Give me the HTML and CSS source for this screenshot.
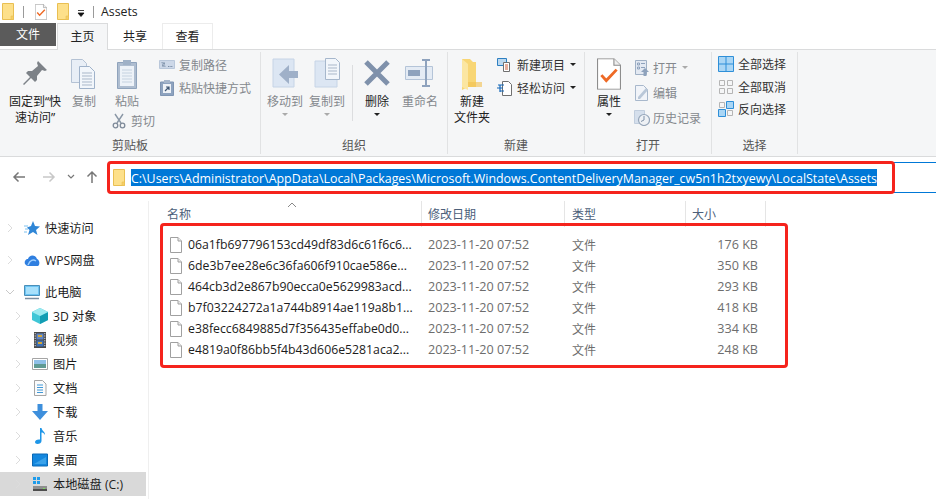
FILE: index.html
```html
<!DOCTYPE html>
<html lang="zh">
<head>
<meta charset="utf-8">
<title>Assets</title>
<link rel="stylesheet" href="styles.css">
</head>
<body>
<svg class="defs" width="0" height="0" aria-hidden="true">
  <defs>
    <symbol id="folder" viewBox="0 0 12 17"><path d="M.5.5h11v16H.5z" fill="#fde08a" stroke="#e9bf52"/><path d="M9 13h2.500v3.500H9z" fill="#f6cf66" stroke="#e9bf52" stroke-width=".6"/></symbol>
    <symbol id="file" viewBox="0 0 12 16"><path d="M.5.500h7.500l3.500 3.500v11.500H.5z" fill="#fff" stroke="#a0a0a0"/><path d="M8 .5V4h3.500" fill="#ececec" stroke="#a0a0a0"/></symbol>
    <symbol id="checkdoc" viewBox="0 0 22 29"><path d="M.5.500h15l6 6v22H.5z" fill="#fff" stroke="#8d8d8d"/><path d="M15.500.5v6h6" fill="#eee" stroke="#8d8d8d"/><path d="M4 15.500l4.500 5L18 10.500" fill="none" stroke="#ee6a26" stroke-width="2.600"/></symbol>
    <symbol id="back" viewBox="0 0 14 12"><path d="M13 6H2M6.500 1.500L2 6l4.500 4.500" fill="none" stroke="currentColor" stroke-width="1.500"/></symbol>
    <symbol id="up" viewBox="0 0 12 14"><path d="M6 13V2M1.500 6.500L6 2l4.500 4.500" fill="none" stroke="currentColor" stroke-width="1.500"/></symbol>
    <symbol id="chev" viewBox="0 0 8 10"><path d="M2 1l4 4-4 4" fill="none" stroke="currentColor" stroke-width="1"/></symbol>
  </defs>
</svg>
<div class="window">
  <header class="titlebar">
    <svg class="qa-folder"><use href="#folder"/></svg>
    <span class="qa-sep"></span>
    <svg class="qa-check"><use href="#checkdoc"/></svg>
    <svg class="qa-folder qa-folder2"><use href="#folder"/></svg>
    <svg class="qa-drop" viewBox="0 0 8 8"><path d="M1 1.500h6M1 4h6L4 7.500z" fill="#111" stroke="#111" stroke-width=".8"/></svg>
    <span class="qa-sep"></span>
    <span class="title">Assets</span>
  </header>

  <nav class="tabs">
    <span class="tab tab-file">文件</span>
    <span class="tab tab-active">主页</span>
    <span class="tab tab-share">共享</span>
    <span class="tab tab-hover">查看</span>
  </nav>

  <section class="ribbon">
    <div class="group g-clip">
      <div class="group-body">
        <div class="big w-pin">
          <svg class="ico32" viewBox="0 0 32 32"><path d="M19 3l9 9-2 1-3-1-5 6 0 4-2 2-4-4-7 7-1-1 7-7-4-4 2-2 4 0 6-5-1-3z" fill="#7d8288"/></svg>
          <span class="lbl">固定到“快<br>速访问”</span>
        </div>
        <div class="big w-copy dis">
          <svg class="ico32" viewBox="0 0 32 32"><path d="M3.500 1.500h11l4 4v19h-15z" fill="#e8eef6" stroke="#b4c2d4"/><path d="M11.500 8.500h10l5 5v17h-15z" fill="#f2f6fb" stroke="#9fb2ca"/><path d="M14 15h10M14 18h10M14 21h10M14 24h10M14 27h10" stroke="#a9b7c9"/></svg>
          <span class="lbl">复制</span>
        </div>
        <div class="clip-col">
          <div class="big w-paste dis">
            <svg class="ico32" viewBox="0 0 32 32"><path d="M6.500 4.500h19v26h-19z" fill="#aebdd0" stroke="#8fa3bc"/><path d="M9 8h14v20H9z" fill="#edf2f8"/><path d="M12 2h8v5h-8z" fill="#9fb1c7"/><path d="M11 12h10M11 15h10M11 18h10M11 21h10M11 24h10" stroke="#c5d2e0"/></svg>
            <span class="lbl">粘贴</span>
          </div>
          <div class="small dis cut">
            <svg class="ico-s" viewBox="0 0 14 16"><path d="M3 1l6 9M11 1L5 10" stroke="#8a97a6" stroke-width="1.400"/><circle cx="3.500" cy="12.500" r="2.300" fill="none" stroke="#7e8a99" stroke-width="1.300"/><circle cx="10.500" cy="12.500" r="2.300" fill="none" stroke="#7e8a99" stroke-width="1.300"/></svg>
            <span>剪切</span>
          </div>
        </div>
        <div class="small-col clip-right">
          <div class="small dis">
            <svg class="ico-s" viewBox="0 0 16 10"><path d="M.5.500h15v8H.5z" fill="#cdd8e8" stroke="#b9c7da"/><path d="M3 2l1 5 1-5 1 5M9 6.500h5" fill="none" stroke="#5f7692" stroke-width=".8" stroke-dasharray="1 .6"/></svg>
            <span>复制路径</span>
          </div>
          <div class="small dis">
            <svg class="ico-s" viewBox="0 0 14 16"><path d="M.5 2h13v13.500H.5z" fill="#8ea3bf" stroke="#7f95b3"/><path d="M4 0h6v3H4z" fill="#a5b5ca"/><path d="M3 4h8v9H3z" fill="#eef2f7"/><path d="M5 11l4-4M6 7h3v3" fill="none" stroke="#3e5674" stroke-width="1.200"/></svg>
            <span>粘贴快捷方式</span>
          </div>
        </div>
      </div>
      <div class="group-label">剪贴板</div>
    </div>

    <div class="group g-org">
      <div class="group-body">
        <div class="big w-move dis">
          <svg class="ico32" viewBox="0 0 32 32"><path d="M4 1h21v28H4z" fill="#dce6f3" stroke="#c6d4e6"/><path d="M30 11v7H21v6l-10-9.500L21 5v6z" fill="#9fb0c8" transform="translate(-1 2)"/></svg>
          <span class="lbl">移动到</span><i class="arrow grey"></i>
        </div>
        <div class="big w-copyto dis">
          <svg class="ico32" viewBox="0 0 32 32"><path d="M4 3h22v26H4z" fill="#dce6f3" stroke="#c6d4e6"/><path d="M14.500.5h10l4 4v17h-14z" fill="#f2f6fb" stroke="#a6b7cc"/><path d="M17 7h9M17 10h9M17 13h9M17 16h9" stroke="#a9b7c9"/></svg>
          <span class="lbl">复制到</span><i class="arrow grey"></i>
        </div>
        <span class="vsep"></span>
        <div class="big w-del">
          <svg class="ico32" viewBox="0 0 32 32"><path d="M5 4l22 22M27 4L5 26" stroke="#7f91ab" stroke-width="5"/></svg>
          <span class="lbl">删除</span><i class="arrow"></i>
        </div>
        <div class="big w-ren dis">
          <svg class="ico32" viewBox="0 0 32 32"><path d="M1.500 8.500h27v13h-27z" fill="#e4ebf4" stroke="#b4c4d8"/><path d="M4 12h12v6H4z" fill="#8ea2bd"/><path d="M18 2h8M18 28h8M22 2v26" fill="none" stroke="#8ea2bd" stroke-width="2"/></svg>
          <span class="lbl">重命名</span>
        </div>
      </div>
      <div class="group-label">组织</div>
    </div>

    <div class="group g-new">
      <div class="group-body">
        <div class="big w-newf enabled">
          <svg class="ico32" viewBox="0 0 32 32"><path d="M6 1l8 0 3 3 0 0h3v25H12l-6 3z" fill="#f8d675"/><path d="M6 1v28l6 3V6z" fill="#fbe6a2"/><path d="M12 24h14v5H12z" fill="#f1c04f" opacity=".6"/></svg>
          <span class="lbl">新建<br>文件夹</span>
        </div>
        <div class="small-col new-right">
          <div class="small">
            <svg class="ico-s" viewBox="0 0 16 14"><path d="M.5.500h9v7h-9z" fill="#bcd8ef" stroke="#2d7fc1"/><path d="M6.500 4.500h6v9h-6z" fill="#fff" stroke="#707070"/><path d="M8 7h3M8 9h3M8 11h3" stroke="#d05a34"/></svg>
            <span>新建项目</span><i class="arrow side"></i>
          </div>
          <div class="small">
            <svg class="ico-s" viewBox="0 0 16 16"><path d="M5.500 1.500h6l3 3v11h-9z" fill="#fff" stroke="#707070"/><path d="M1 5h6M0 8h6M3 11h4M3 5v7" fill="none" stroke="#1366b8" stroke-width="1.200"/></svg>
            <span>轻松访问</span><i class="arrow side"></i>
          </div>
        </div>
      </div>
      <div class="group-label">新建</div>
    </div>

    <div class="group g-open">
      <div class="group-body">
        <div class="big w-prop enabled">
          <svg class="ico32" viewBox="0 0 22 29"><use href="#checkdoc"/></svg>
          <span class="lbl">属性</span><i class="arrow"></i>
        </div>
        <div class="small-col open-right">
          <div class="small dis">
            <svg class="ico-s" viewBox="0 0 14 16"><path d="M.5.500h11v14H.5z" fill="#e3e9f2" stroke="#9fb0c5"/><path d="M2.500 3h2v2h-2zM2.500 7h2v2h-2zM6 3.500h4M6 7.500h4" stroke="#8ea2bc" fill="none"/><path d="M10 8l4 4h-2.500v4h-3v-4H6z" fill="#8ea2bc"/></svg>
            <span>打开</span><i class="arrow side grey"></i>
          </div>
          <div class="small dis">
            <svg class="ico-s" viewBox="0 0 14 16"><path d="M.5.500h8l4 4v11H.5z" fill="#f1f4f9" stroke="#a8b8cc"/><path d="M3 12l8-9 2 2-8 9H3z" fill="#b9c7d8"/></svg>
            <span>编辑</span>
          </div>
          <div class="small dis">
            <svg class="ico-s" viewBox="0 0 16 16"><path d="M.5.500h10v13H.5z" fill="#d5dfec" stroke="#c0cddd"/><circle cx="10" cy="10" r="5.500" fill="#eef1f5" stroke="#95a5b9" stroke-width="1.200"/><path d="M10 6v4l-3 1.500" fill="none" stroke="#7f91a8"/></svg>
            <span>历史记录</span>
          </div>
        </div>
      </div>
      <div class="group-label">打开</div>
    </div>

    <div class="group g-sel">
      <div class="group-body">
        <div class="small-col sel-col">
          <div class="small">
            <svg class="ico-s" viewBox="0 0 16 16"><path d="M.5.500h15v15H.5zM8 .5v15M.5 8h15" fill="#aad6f5" stroke="#2e8fd8"/></svg>
            <span>全部选择</span>
          </div>
          <div class="small">
            <svg class="ico-s" viewBox="0 0 16 16"><path d="M1.500 1.500h5v5h-5zM9.500 1.500h5v5h-5zM1.500 9.500h5v5h-5zM9.500 9.500h5v5h-5z" fill="none" stroke="#b5b5b5"/></svg>
            <span>全部取消</span>
          </div>
          <div class="small">
            <svg class="ico-s" viewBox="0 0 16 16"><path d="M1.500 1.500h5v5h-5zM9.500 9.500h5v5h-5z" fill="none" stroke="#b5b5b5"/><path d="M8.500.5h7v7h-7zM.5 8.500h7v7h-7z" fill="#aad6f5" stroke="#2e8fd8"/></svg>
            <span>反向选择</span>
          </div>
        </div>
      </div>
      <div class="group-label">选择</div>
    </div>
  </section>

  <section class="addressrow">
    <div class="navbtns">
      <svg class="nav-back"><use href="#back"/></svg>
      <svg class="nav-fwd"><use href="#back"/></svg>
      <svg class="nav-down" viewBox="0 0 8 6"><path d="M1 1l3 3 3-3" fill="none" stroke="#777" stroke-width="1.200"/></svg>
      <svg class="nav-up"><use href="#up"/></svg>
    </div>
    <div class="addressbar">
      <svg class="addr-folder"><use href="#folder"/></svg>
      <span class="path">C:\Users\Administrator\AppData\Local\Packages\Microsoft.Windows.ContentDeliveryManager_cw5n1h2txyewy\LocalState\Assets</span>
    </div>
  </section>

  <main class="content">
    <aside class="tree">
      <div class="node lv1"><svg class="tw"><use href="#chev"/></svg>
        <svg class="ti" viewBox="0 0 16 16"><path d="M9 1l2 5 5 .5-4 3.500 1.500 5L9 12l-5 3 1.500-5L3 7.500 7 6z" fill="#2f86d6"/><path d="M0 6h4M1 9h3M0 12h3" stroke="#7cc0ee"/></svg>
        <span>快速访问</span></div>
      <div class="node lv1 gap"><svg class="tw"><use href="#chev"/></svg>
        <svg class="ti" viewBox="0 0 16 16"><path d="M1 12c-1-3 1-5 3-5 1-4 7-5 9 0 3 1 3 6 1 7H4c-1 0-2-1-3-2z" fill="#2f7fe0"/><path d="M4 13c2-5 5-6 8-4" fill="none" stroke="#9fd0ff" stroke-width="1.400"/></svg>
        <span>WPS网盘</span></div>
      <div class="node lv1 gap"><svg class="tw open" viewBox="0 0 10 8"><path d="M1 2l4 4 4-4" fill="none" stroke="currentColor"/></svg>
        <svg class="ti" viewBox="0 0 16 16"><path d="M.5 1.500h15v10H.5z" fill="#6cc4f4" stroke="#4a8fb8"/><path d="M2 3h12v7H2z" fill="#a7e0fb"/><path d="M1 14.500h14" stroke="#7b8ea0" stroke-width="1.500"/></svg>
        <span>此电脑</span></div>
      <div class="node lv2"><svg class="tw"><use href="#chev"/></svg>
        <svg class="ti" viewBox="0 0 16 16"><path d="M8 0l8 4v8l-8 4-8-4V4z" fill="#3fc6d6"/><path d="M8 8l8-4v8l-8 4z" fill="#139db3"/><path d="M8 0l8 4-8 4-8-4z" fill="#9ceaf0"/></svg>
        <span>3D 对象</span></div>
      <div class="node lv2"><svg class="tw"><use href="#chev"/></svg>
        <svg class="ti" viewBox="0 0 16 16"><path d="M2 0h12v16H2z" fill="#4a4a4a"/><path d="M4.500 1.500h7v6h-7z" fill="#5f86c8"/><path d="M4.500 8.500h7v6h-7z" fill="#3f70b5"/><path d="M6 4h4M6 11h4" stroke="#d8a936" stroke-width="2"/><path d="M3.200 1v14M12.800 1v14" stroke="#ddd" stroke-dasharray="1.200 1.200"/></svg>
        <span>视频</span></div>
      <div class="node lv2"><svg class="tw"><use href="#chev"/></svg>
        <svg class="ti" viewBox="0 0 16 16"><path d="M.5 2.500h15v11H.5z" fill="#fff" stroke="#a5a5a5"/><path d="M2 4h12v4H2z" fill="#8fc0e8"/><path d="M2 8h12v4H2z" fill="#5f9a93"/></svg>
        <span>图片</span></div>
      <div class="node lv2"><svg class="tw"><use href="#chev"/></svg>
        <svg class="ti" viewBox="0 0 16 16"><path d="M2.500.5h8l3.500 3.500v11.500H2.500z" fill="#fbfbfb" stroke="#a5a5a5"/><path d="M5 5h6M5 7.500h6M5 10h6M5 12.500h6" stroke="#3f98d8"/></svg>
        <span>文档</span></div>
      <div class="node lv2"><svg class="tw"><use href="#chev"/></svg>
        <svg class="ti" viewBox="0 0 16 16"><path d="M5.500 0h5v7H16l-8 9-8-9h5.500z" fill="#3e8fdc"/></svg>
        <span>下载</span></div>
      <div class="node lv2"><svg class="tw"><use href="#chev"/></svg>
        <svg class="ti" viewBox="0 0 16 16"><path d="M8 0h1.500c.5 3 4 4 3.500 7-1-2-2.500-2.500-3.500-2.500V13c0 2-2 3-4 3-1.500 0-2.500-1-2.500-2 0-1.500 2-3 5-2.500z" fill="#1e96e8"/></svg>
        <span>音乐</span></div>
      <div class="node lv2"><svg class="tw"><use href="#chev"/></svg>
        <svg class="ti" viewBox="0 0 16 16"><path d="M.5 2h15v12H.5z" fill="#1487de" stroke="#0b68b5"/><path d="M2 12L14 5v7z" fill="#3aa2ea"/></svg>
        <span>桌面</span></div>
      <div class="node lv2 selected"><svg class="tw"><use href="#chev"/></svg>
        <svg class="ti" viewBox="0 0 16 16"><path d="M1 1h3v3H1zM5 1h3v3H5zM1 5h3v3H1zM5 5h3v3H5z" fill="#1e9bea"/><path d="M1 10h14v5H1z" fill="#8f8f8f"/><path d="M1 13h14v2H1z" fill="#4d4d4d"/><path d="M11 12h2v1h-2z" fill="#7de05a"/></svg>
        <span>本地磁盘 (C:)</span></div>
    </aside>

    <div class="list">
      <div class="head">
        <span class="hc c-name">名称<svg class="sort" viewBox="0 0 10 6"><path d="M1 5l4-4 4 4" fill="none" stroke="#888"/></svg></span>
        <span class="hc c-date">修改日期</span>
        <span class="hc c-type">类型</span>
        <span class="hc c-size">大小</span>
      </div>
      <div class="rows">
        <div class="row"><span class="c-name nm"><svg class="fi"><use href="#file"/></svg>06a1fb697796153cd49df83d6c61f6c6...</span><span class="c-date dt">2023-11-20 07:52</span><span class="c-type">文件</span><span class="c-size sz">176 KB</span></div>
        <div class="row"><span class="c-name nm"><svg class="fi"><use href="#file"/></svg>6de3b7ee28e6c36fa606f910cae586e...</span><span class="c-date dt">2023-11-20 07:52</span><span class="c-type">文件</span><span class="c-size sz">350 KB</span></div>
        <div class="row"><span class="c-name nm"><svg class="fi"><use href="#file"/></svg>464cb3d2e867b90ecca0e5629983acd...</span><span class="c-date dt">2023-11-20 07:52</span><span class="c-type">文件</span><span class="c-size sz">293 KB</span></div>
        <div class="row"><span class="c-name nm"><svg class="fi"><use href="#file"/></svg>b7f03224272a1a744b8914ae119a8b1...</span><span class="c-date dt">2023-11-20 07:52</span><span class="c-type">文件</span><span class="c-size sz">418 KB</span></div>
        <div class="row"><span class="c-name nm"><svg class="fi"><use href="#file"/></svg>e38fecc6849885d7f356435effabe0d0...</span><span class="c-date dt">2023-11-20 07:52</span><span class="c-type">文件</span><span class="c-size sz">334 KB</span></div>
        <div class="row"><span class="c-name nm"><svg class="fi"><use href="#file"/></svg>e4819a0f86bb5f4b43d606e5281aca2...</span><span class="c-date dt">2023-11-20 07:52</span><span class="c-type">文件</span><span class="c-size sz">248 KB</span></div>
      </div>
    </div>
  </main>

  <div class="mark mark-path"></div>
  <div class="mark mark-files"></div>
</div>
</body>
</html>
```

FILE: styles.css
```css
* { box-sizing: border-box; }
html, body { margin: 0; padding: 0; background: #fff; }
body {
  font-family: "Open Sans", "Noto Sans CJK SC", sans-serif;
  font-size: 12px;
  color: #1c1c1c;
}
.defs { position: absolute; }
svg { display: block; flex: none; }
.window { position: relative; width: 936px; height: 499px; overflow: hidden; }

/* title bar */
.titlebar { height: 23px; display: flex; align-items: center; padding-left: 2px; }
.qa-folder { width: 12px; height: 17px; }
.qa-folder2 { margin-left: 10px; }
.qa-sep { width: 1px; height: 12px; background: #9a9a9a; margin-left: 9px; }
.qa-check { width: 12px; height: 16px; margin-left: 11px; }
.qa-drop { width: 8px; height: 8px; margin-left: 8px; margin-top: 2px; }
.qa-drop + .qa-sep { margin-left: 8px; }
.title { margin-left: 7px; color: #222; font-size: 12.3px; }

/* tabs */
.tabs { height: 27px; display: flex; position: relative; z-index: 1; }
.tab { display: flex; align-items: center; justify-content: center; color: #222; height: 25px; }
.tab-file { width: 56px; height: 23px; background: #5b5b5b; color: #fff; margin-right: 1px; padding-bottom: 1px; }
.tab-active { width: 51px; height: 27px; background: #f5f6f7; border: 1px solid #dadbdc; border-bottom: 0; padding-bottom: 2px; }
.tab-share { width: 54px; }
.tab-hover { width: 51px; height: 26px; border: 1px solid #ececec; border-bottom: 0; padding-bottom: 1px; }

/* ribbon */
.ribbon {
  height: 108px; margin-top: -1px; display: flex; background: #f5f6f7;
  border-top: 1px solid #dadbdc; border-bottom: 1px solid #dadbdc;
}
.group { display: flex; flex-direction: column; margin: 2px 0; border-right: 1px solid #e1e2e3; }
.group-body { height: 84px; display: flex; }
.group-label { height: 19px; line-height: 19px; text-align: center; color: #555; padding-top: 1px; }
.g-clip { width: 261px; }
.g-org { width: 187px; }
.g-new { width: 137px; }
.g-open { width: 127px; }
.g-sel { width: 86px; }

.big { display: flex; flex-direction: column; align-items: center; padding-top: 6px; position: relative; color: #84888d; }
.big .ico32 { width: 32px; height: 32px; }
.lbl { display: block; text-align: center; line-height: 16px; margin-top: 4px; white-space: nowrap; }
.dis { color: #84888d; }
.w-pin, .w-del, .w-newf, .w-prop { color: #222; }
.w-pin { width: 60px; margin-left: 5px; }
.w-copy { width: 36px; margin-left: 1px; }
.clip-col { width: 46px; margin-left: 6px; }
.w-paste { width: 38px; }
.cut { margin-top: -1px; padding-left: 3px; }
.clip-right { margin-left: 5px; }
.w-move { width: 38px; margin-left: 5px; }
.w-copyto { width: 38px; margin-left: 4px; }
.vsep { width: 1px; height: 56px; background: #dcdddf; margin: 13px 7px 0 6px; }
.w-del { width: 34px; }
.w-ren { width: 38px; margin-left: 7px; }
.w-newf { width: 48px; margin-left: 0; }
.new-right { margin-left: 1px; }
.w-prop { width: 36px; margin-left: 6px; }
.w-prop .ico32 { width: 24px; }

.arrow { display: block; width: 0; height: 0; border: 3px solid transparent; border-top: 3px solid #222; border-bottom: 0; margin-top: 3px; }
.arrow.grey { border-top-color: #aaa; }
.arrow.side { margin: 0 0 0 5px; }

.small-col { display: flex; flex-direction: column; padding-top: 1px; }
.small { display: flex; align-items: center; height: 23px; color: #333; white-space: nowrap; }
.small.dis { color: #84888d; }
.ico-s { width: 16px; height: 16px; margin-right: 4px; }
.small-col.open-right { margin-left: 7px; padding-top: 4px; gap: 2px; }
.open-right .ico-s { margin-right: 3px; }
.small-col.sel-col { margin-left: 6px; }
.sel-col .small { height: 22.5px; }

/* address row */
.addressrow { height: 37px; display: flex; padding-top: 5px; }
.navbtns { width: 108px; display: flex; align-items: center; height: 30px; color: #777; }
.nav-back { width: 14px; height: 12px; margin-left: 12px; }
.nav-fwd { width: 14px; height: 12px; margin-left: 16px; color: #c8c8c8; transform: scaleX(-1); }
.nav-down { width: 8px; height: 6px; margin-left: 11px; }
.nav-up { width: 12px; height: 14px; margin-left: 11px; }
.addressbar { flex: 1; height: 31px; border: 1px solid #0078d7; border-right: 0; display: flex; align-items: center; padding-left: 4px; }
.addr-folder { width: 12px; height: 17px; }
.path { margin-left: 6px; background: #0078d7; color: #fff; line-height: 19px; height: 17px; white-space: nowrap; font-size: 12.42px; }

/* body */
.content { display: flex; height: 305px; }
.tree { width: 149px; border-right: 1px solid #efefef; margin-top: 7px; padding-top: 15px; font-size: 12.2px; }
.node { height: 24px; display: flex; align-items: center; color: #1c1c1c; width: 146px; }
.node.gap { margin-top: 8px; }
.tw { width: 8px; height: 10px; color: #dcdcdc; margin-left: 6px; }
.tw.open { color: #c8c8c8; width: 10px; height: 8px; margin-left: 5px; }
.lv1 .ti { margin-left: 10px; }
.lv1 .tw.open + .ti { margin-left: 9px; }
.lv2 .tw { margin-left: 14px; }
.lv2 .ti { margin-left: 10px; }
.ti { width: 16px; height: 16px; margin-right: 5px; }
.selected { background: #d9d9d9; }

.list { flex: 1; padding-top: 7px; }
.head { height: 27px; display: flex; color: #4c607a; }
.hc { height: 26px; display: flex; align-items: center; border-right: 1px solid #e5e5e5; position: relative; }
.c-name { width: 273px; flex: none; }
.c-date { width: 143px; flex: none; padding-left: 6px; }
.c-type { width: 121px; flex: none; padding-left: 7px; }
.c-size { width: 80px; flex: none; padding-left: 6px; }
.head .c-name { padding-left: 18px; }
.sort { position: absolute; left: 138px; top: 1px; width: 10px; height: 6px; }
.rows { padding-top: 6px; }
.row { height: 21px; display: flex; align-items: center; color: #6d6d6d; white-space: nowrap; }
.nm { color: #1c1c1c; display: flex; align-items: center; padding-left: 21px; font-size: 12.28px; }
.dt { font-size: 12.6px; }
.fi { width: 12px; height: 16px; margin-right: 6px; }
.sz { text-align: right; padding-right: 8px; font-size: 12.6px; }

/* red annotation frames drawn over the screenshot */
.mark { position: absolute; border: 3px solid #f5231c; border-radius: 4px; pointer-events: none; }
.mark-path { left: 107px; top: 161px; width: 788px; height: 33px; }
.mark-files { left: 160px; top: 223px; width: 628px; height: 145px; }
```
